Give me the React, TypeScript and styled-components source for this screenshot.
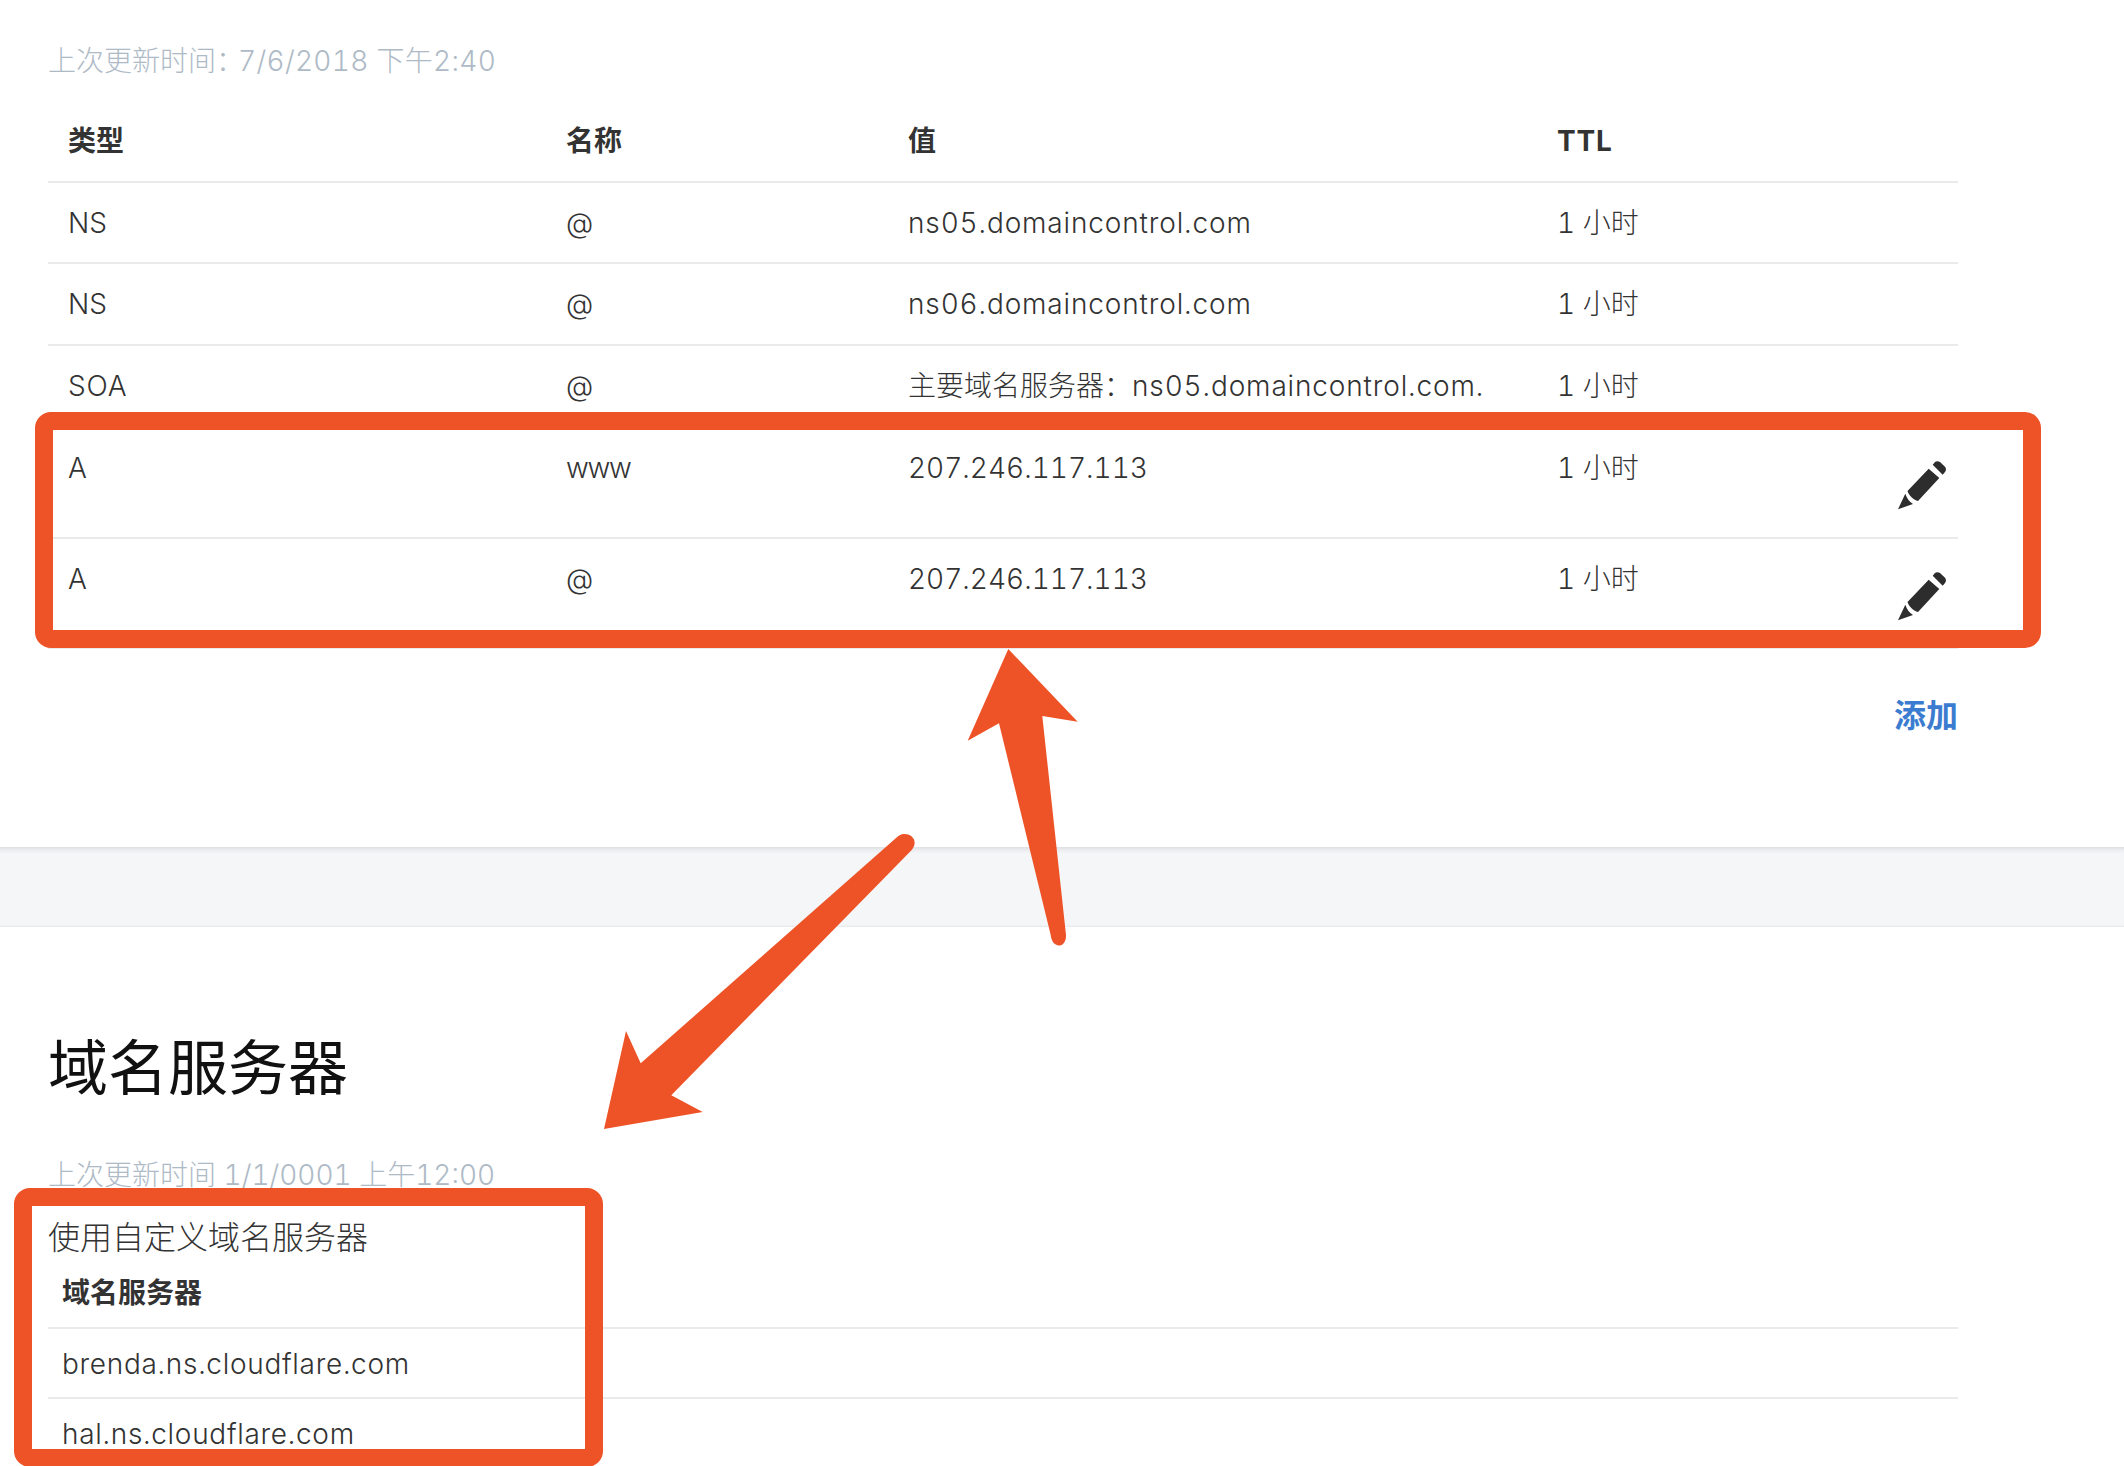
import React from "react";
import styled, { createGlobalStyle } from "styled-components";

const Global = createGlobalStyle`
  html, body { margin: 0; padding: 0; background: #fff; }
  body {
    font-family: Inter, "Noto Sans CJK SC", sans-serif;
    font-variant-numeric: tabular-nums;
    font-feature-settings: "tnum";
    color: #333;
    font-size: 28px;
    font-weight: 300;
  }
`;

const Page = styled.div`
  position: relative;
  width: 2124px;
  height: 1466px;
  overflow: hidden;
  background: #fff;
`;

const RecordsSection = styled.section`
  box-sizing: border-box;
  height: 847px;
  padding: 40px 166px 0 48px;
`;

const Timestamp = styled.div`
  font-size: 28px;
  line-height: 42px;
  color: #aebac6;
`;

const Colon = styled.span`
  letter-spacing: -6px;
`;

const StampValue = styled.span`
  letter-spacing: 0.3px;
`;

const Row = styled.div<{ $h: number }>`
  box-sizing: border-box;
  display: grid;
  grid-template-columns: 498px 342px 649px 1fr 60px;
  height: ${(p) => p.$h}px;
  padding-top: 20px;
  line-height: 40px;
  border-bottom: 2px solid #e9eaeb;
`;

const HeadRow = styled(Row)`
  margin-top: 17px;
  padding-top: 22px;
  font-weight: 700;
`;

const Cell = styled.div`
  padding-left: 20px;
  white-space: nowrap;
`;

const SpacedCell = styled(Cell)`
  letter-spacing: 0.85px;
`;

const TightCell = styled(Cell)`
  letter-spacing: -1.3px;
`;

const At = styled.span`
  vertical-align: 2px;
`;

const Han = styled.span`
  letter-spacing: 0;
`;

const EditCell = styled.div`
  padding-top: 13px;
`;

const AddLink = styled.div`
  margin-top: 47px;
  text-align: right;
  font-size: 32px;
  line-height: 40px;
  font-weight: 700;
  color: #3b7cd1;
`;

const Band = styled.div`
  height: 80px;
  background: #f5f6f8;
  box-shadow: inset 0 6px 5px -4px #d9dadd, inset 0 -3px 2px -2px #e6e7ea;
`;

const NameServerSection = styled.section`
  padding: 101px 166px 0 48px;
`;

const Title = styled.h2`
  margin: 0;
  font-size: 60px;
  line-height: 80px;
  font-weight: 400;
  color: #111;
`;

const NsTimestamp = styled(Timestamp)`
  margin-top: 46px;
`;

const CustomLabel = styled.div`
  margin-top: 22px;
  font-size: 32px;
  line-height: 40px;
`;

const NsRow = styled.div`
  box-sizing: border-box;
  height: 70px;
  padding: 15px 0 0 14px;
  line-height: 40px;
  letter-spacing: 0.7px;
  border-bottom: 2px solid #e9eaeb;
`;

const NsHead = styled(NsRow)`
  height: 71px;
  font-weight: 700;
  letter-spacing: 0;
`;

const Callout = styled.div`
  position: absolute;
  box-sizing: border-box;
  border: 18px solid #ee5328;
  border-radius: 16px;
`;

const RecordsCallout = styled(Callout)`
  left: 35px;
  top: 412px;
  width: 2006px;
  height: 236px;
`;

const NameServerCallout = styled(Callout)`
  left: 14px;
  top: 1188px;
  width: 589px;
  height: 279px;
`;

const Arrows = styled.svg`
  position: absolute;
  left: 0;
  top: 0;
`;

const Pencil = () => (
  <svg width="48" height="49" viewBox="0 0 48 49">
    <path
      fill="#2d2d2d"
      d="M0 48.3 7.3 32.7C9 37.5 11 40.5 15 43ZM9.5 30 30.7 7.7 41.3 17 20 40C16 39 11 35 9.5 30ZM34.7 3.7 37 1C38 0 40.5 0 42 1L47 5.7C48.3 7 48.3 9.5 47 11L44.7 13.7Z"
    />
  </svg>
);

export default function App() {
  return (
    <Page>
      <Global />
      <RecordsSection>
        <Timestamp>
          上次更新时间<Colon>：</Colon>
          <StampValue>7/6/2018 下午2:40</StampValue>
        </Timestamp>
        <HeadRow $h={84}>
          <Cell>类型</Cell>
          <Cell>名称</Cell>
          <Cell>值</Cell>
          <SpacedCell>TTL</SpacedCell>
        </HeadRow>
        <Row $h={81}>
          <Cell>NS</Cell>
          <Cell><At>@</At></Cell>
          <SpacedCell>ns05.domaincontrol.com</SpacedCell>
          <Cell>1 小时</Cell>
        </Row>
        <Row $h={82}>
          <Cell>NS</Cell>
          <Cell><At>@</At></Cell>
          <SpacedCell>ns06.domaincontrol.com</SpacedCell>
          <Cell>1 小时</Cell>
        </Row>
        <Row $h={82}>
          <SpacedCell>SOA</SpacedCell>
          <Cell><At>@</At></Cell>
          <SpacedCell>
            <Han>主要域名服务器：</Han>ns05.domaincontrol.com.
          </SpacedCell>
          <Cell>1 小时</Cell>
        </Row>
        <Row $h={111}>
          <Cell>A</Cell>
          <TightCell>www</TightCell>
          <Cell>207.246.117.113</Cell>
          <Cell>1 小时</Cell>
          <EditCell>
            <Pencil />
          </EditCell>
        </Row>
        <Row $h={110}>
          <Cell>A</Cell>
          <Cell><At>@</At></Cell>
          <Cell>207.246.117.113</Cell>
          <Cell>1 小时</Cell>
          <EditCell>
            <Pencil />
          </EditCell>
        </Row>
        <AddLink>添加</AddLink>
      </RecordsSection>
      <Band />
      <NameServerSection>
        <Title>域名服务器</Title>
        <NsTimestamp>上次更新时间 1/1/0001 上午12:00</NsTimestamp>
        <CustomLabel>使用自定义域名服务器</CustomLabel>
        <NsHead>域名服务器</NsHead>
        <NsRow>brenda.ns.cloudflare.com</NsRow>
        <NsRow>hal.ns.cloudflare.com</NsRow>
      </NameServerSection>
      <RecordsCallout />
      <NameServerCallout />
      <Arrows width="2124" height="1466" viewBox="0 0 2124 1466">
        <path
          fill="#ee5328"
          d="M1008.3 649 1077.7 721.7 1042.3 716 1066 935C1066.5 949 1052 949 1050.7 935L999 723.3 967.7 740.7Z"
        />
        <path
          fill="#ee5328"
          d="M604 1129 626 1031 640.7 1063.3 898.3 836C906 830 921 838 911.7 850L671.3 1095.3 702.7 1112Z"
        />
      </Arrows>
    </Page>
  );
}
